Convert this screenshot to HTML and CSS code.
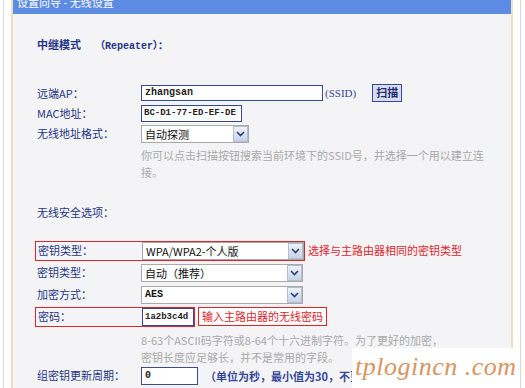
FILE: index.html
```html
<!DOCTYPE html>
<html lang="zh-CN">
<head>
  <meta charset="UTF-8" />
  <title>设置向导 - 无线设置</title>
  <link rel="stylesheet" href="styles.css">
</head>
<body>

<div class="page">
  <div class="panel">
    <div class="head"><span>设置向导 - 无线设置</span></div>

    <div class="content">
      <div class="title">中继模式<span class="mode">（Repeater）：</span></div>

      <!-- remote AP -->
      <div class="form">
        <div class="row">
          <div class="label">远端AP：</div>
          <span class="input ssid">zhangsan</span>
          <span class="unit">(SSID)</span>
          <span class="btn">扫描</span>
        </div>
        <div class="row">
          <div class="label">MAC地址：</div>
          <span class="input mac">BC-D1-77-ED-EF-DE</span>
        </div>
        <div class="row">
          <div class="label">无线地址格式：</div>
          <span class="select short">自动探测<i class="arrow"><svg width="9" height="6" viewBox="0 0 9 6"><polyline points="1,1 4.5,4.5 8,1" fill="none" stroke="#2a3f7a" stroke-width="1.6"/></svg></i></span>
        </div>
        <div class="hint">你可以点击扫描按钮搜索当前环境下的SSID号，并选择一个用以建立连<br>接。</div>
      </div>

      <div class="section">无线安全选项：</div>

      <!-- security -->
      <div class="form sec">
        <div class="row wide">
          <div class="mark">
            <div class="label">密钥类型：</div>
            <span class="select long">WPA/WPA2-个人版<i class="arrow"><svg width="9" height="6" viewBox="0 0 9 6"><polyline points="1,1 4.5,4.5 8,1" fill="none" stroke="#2a3f7a" stroke-width="1.6"/></svg></i></span>
          </div>
          <span class="note">选择与主路由器相同的密钥类型</span>
        </div>
        <div class="row wide">
          <div class="label">密钥类型：</div>
          <span class="select long">自动（推荐）<i class="arrow"><svg width="9" height="6" viewBox="0 0 9 6"><polyline points="1,1 4.5,4.5 8,1" fill="none" stroke="#2a3f7a" stroke-width="1.6"/></svg></i></span>
        </div>
        <div class="row wide">
          <div class="label">加密方式：</div>
          <span class="select long mono">AES<i class="arrow"><svg width="9" height="6" viewBox="0 0 9 6"><polyline points="1,1 4.5,4.5 8,1" fill="none" stroke="#2a3f7a" stroke-width="1.6"/></svg></i></span>
        </div>
        <div class="row wide">
          <div class="mark">
            <div class="label">密码：</div>
            <span class="input pwd">1a2b3c4d</span>
          </div>
          <span class="note boxed">输入主路由器的无线密码</span>
        </div>
        <div class="hint">8-63个ASCII码字符或8-64个十六进制字符。为了更好的加密，<br>密钥长度应足够长，并不是常用的字段。</div>
        <div class="row wide">
          <div class="label">组密钥更新周期：</div>
          <span class="input period">0</span>
          <span class="unit cn">（单位为秒，最小值为30，不更</span>
        </div>
      </div>
    </div>
  </div>

  <div class="stamp">tplogincn .com</div>
</div>

</body>
</html>
```

FILE: styles.css
```css
body {
  margin: 0;
  background: #fff;
  font-family: "Noto Sans CJK SC", "DejaVu Sans", sans-serif;
  font-size: 11px;
}
.page {
  position: relative;
  width: 516px;
  height: 388px;
  margin-left: 3px;
  border-left: 1px solid #d8d8d8;
  border-right: 1px solid #d8d8d8;
  overflow: hidden;
}
.panel {
  width: 498px;
  height: 100%;
  margin-left: 7px;
  border-left: 2px solid #f3dcc0;
  border-right: 2px solid #f3dcc0;
  background: #f4f4f6;
}
.head {
  height: 14px;
  background: #5c8be4;
  overflow: hidden;
  color: #fff;
  padding-left: 4px;
}
.head span {
  display: block;
  margin-top: -6px;
  line-height: 16px;
  font-size: 11px;
}
.content {
  padding-left: 24px;
}
.title {
  margin-top: 23px;
  line-height: 14px;
  color: #1f3585;
  font-weight: bold;
}
.mode {
  margin-left: 14px;
  font-family: "Liberation Mono", monospace;
  font-size: 10px;
}
.form {
  margin-top: 30px;
}
.row {
  display: flex;
  align-items: flex-start;
  height: 20px;
  padding-top: 1px;
  box-sizing: border-box;
  white-space: nowrap;
}
.row.wide {
  height: 22px;
}
.label {
  width: 104px;
  flex: none;
  color: #1f3585;
  line-height: 16px;
}
.input {
  height: 16px;
  box-sizing: border-box;
  border: 1px solid #34479a;
  background: #fff;
  font-family: "Liberation Mono", monospace;
  font-size: 10px;
  font-weight: bold;
  line-height: 14px;
  padding-left: 3px;
  color: #222;
  overflow: hidden;
}
.ssid { width: 182px; }
.mac { width: 101px; height: 17px; font-size: 9px; padding-left: 2px; line-height: 15px; }
.pwd { width: 52px; height: 18px; line-height: 16px; font-size: 9px; padding-left: 2px; }
.period { width: 57px; height: 18px; border-color: #3c4c8c; line-height: 16px; }
.unit {
  margin-left: 2px;
  color: #34479a;
  font-family: "Liberation Serif", serif;
  font-size: 11px;
  line-height: 16px;
}
.unit.cn {
  margin-left: 7px;
  font-family: "Noto Sans CJK SC", sans-serif;
  font-weight: bold;
  line-height: 18px;
}
.btn {
  margin-left: 16px;
  margin-top: -1px;
  height: 16px;
  padding: 0 3px;
  border: 1px solid #34479a;
  background: #d9dcef;
  color: #1f2d70;
  font-weight: bold;
  line-height: 15px;
}
.select {
  position: relative;
  height: 18px;
  box-sizing: border-box;
  border: 1px solid #a9a9a9;
  background: #fff;
  color: #111;
  line-height: 16px;
  padding-left: 3px;
  font-size: 11px;
}
.select.short { width: 108px; }
.select.long { width: 162px; }
.select.mono {
  font-family: "Liberation Mono", monospace;
  font-size: 10px;
  font-weight: bold;
}
.arrow {
  position: absolute;
  right: 0;
  top: 0;
  width: 15px;
  height: 16px;
  box-sizing: border-box;
  border: 1px solid #b0bed4;
  background: linear-gradient(#eef2f9, #c7d3e6);
  display: flex;
  align-items: center;
  justify-content: center;
}
.hint {
  margin-left: 104px;
  margin-top: 3px;
  color: #a9a9a9;
  line-height: 17px;
  white-space: nowrap;
}
.section {
  margin-top: 24px;
  line-height: 14px;
  color: #1f3585;
}
.form.sec {
  margin-top: 22px;
}
.mark {
  display: flex;
  margin-left: -2px;
  margin-top: -1px;
  padding: 0 0 0 2px;
  border: 1px solid #e0242c;
}
.note {
  margin-left: 3px;
  color: #e0242c;
  line-height: 16px;
}
.note.boxed {
  margin-top: -1px;
  padding: 0 3px;
  height: 17px;
  border: 1px solid #e0242c;
  background: #fff;
}
.stamp {
  position: absolute;
  left: 348px;
  top: 348px;
  width: 168px;
  height: 40px;
  background: #fff;
  color: #d8955f;
  font-family: "Liberation Serif", serif;
  font-style: italic;
  font-size: 26px;
  letter-spacing: 0.5px;
  line-height: 38px;
  padding-left: 3px;
  box-sizing: border-box;
  white-space: nowrap;
}
```
